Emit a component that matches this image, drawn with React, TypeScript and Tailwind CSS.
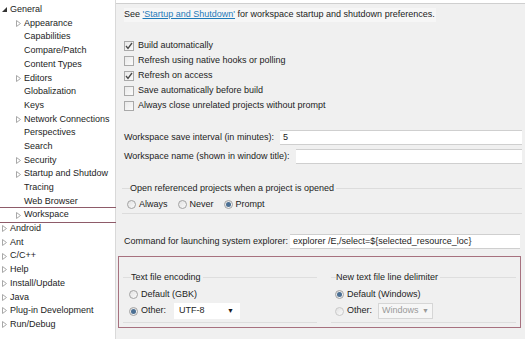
const tree: { label: string; level: number; arrow: "open" | "closed" | "none"; selected?: boolean }[] = [
  { label: "General", level: 0, arrow: "open" },
  { label: "Appearance", level: 1, arrow: "closed" },
  { label: "Capabilities", level: 1, arrow: "none" },
  { label: "Compare/Patch", level: 1, arrow: "none" },
  { label: "Content Types", level: 1, arrow: "none" },
  { label: "Editors", level: 1, arrow: "closed" },
  { label: "Globalization", level: 1, arrow: "none" },
  { label: "Keys", level: 1, arrow: "none" },
  { label: "Network Connections", level: 1, arrow: "closed" },
  { label: "Perspectives", level: 1, arrow: "none" },
  { label: "Search", level: 1, arrow: "none" },
  { label: "Security", level: 1, arrow: "closed" },
  { label: "Startup and Shutdow", level: 1, arrow: "closed" },
  { label: "Tracing", level: 1, arrow: "none" },
  { label: "Web Browser", level: 1, arrow: "none" },
  { label: "Workspace", level: 1, arrow: "closed", selected: true },
  { label: "Android", level: 0, arrow: "closed" },
  { label: "Ant", level: 0, arrow: "closed" },
  { label: "C/C++", level: 0, arrow: "closed" },
  { label: "Help", level: 0, arrow: "closed" },
  { label: "Install/Update", level: 0, arrow: "closed" },
  { label: "Java", level: 0, arrow: "closed" },
  { label: "Plug-in Development", level: 0, arrow: "closed" },
  { label: "Run/Debug", level: 0, arrow: "closed" },
];

const checks = [
  { label: "Build automatically", on: true },
  { label: "Refresh using native hooks or polling", on: false },
  { label: "Refresh on access", on: true },
  { label: "Save automatically before build", on: false },
  { label: "Always close unrelated projects without prompt", on: false },
];

function Arrow({ kind }: { kind: "open" | "closed" | "none" }) {
  if (kind === "none") return <span className="w-[7px]" />;
  if (kind === "open")
    return (
      <svg width="7" height="7" viewBox="0 0 7 7">
        <path d="M6 1 L6 6 L1 6 Z" fill="#333" />
      </svg>
    );
  return (
    <svg width="7" height="7" viewBox="0 0 7 7">
      <path d="M1.5 0.5 L5.5 3.5 L1.5 6.5 Z" fill="none" stroke="#a8a8a8" strokeWidth="1" />
    </svg>
  );
}

function Checkbox({ on }: { on: boolean }) {
  return (
    <span className="flex h-[10px] w-[10px] items-center justify-center border border-[#a9a9a9] bg-gradient-to-br from-[#e9e9e9] to-[#fbfbfb]">
      {on && (
        <svg width="8" height="8" viewBox="0 0 8 8">
          <path d="M1 4 L3 6.5 L7 1" fill="none" stroke="#4a4a4a" strokeWidth="1.3" />
        </svg>
      )}
    </span>
  );
}

function Radio({ on, disabled }: { on: boolean; disabled?: boolean }) {
  return (
    <span
      className={`flex h-[9px] w-[9px] items-center justify-center rounded-full border ${
        disabled ? "border-[#c9c9c9]" : "border-[#a2a2a2]"
      } bg-gradient-to-br from-[#e2e2e2] to-[#fafafa]`}
    >
      {on && <span className="h-[5px] w-[5px] rounded-full bg-[#4b6f93]" />}
    </span>
  );
}

export default function App() {
  return (
    <div className="flex h-[339px] w-[525px] overflow-hidden bg-white font-['Liberation_Sans',Arial,sans-serif] text-[9px] text-[#1c1c1c]">
      {/* preference tree */}
      <div className="flex w-[116px] shrink-0 flex-col border-r border-[#d9d9d9] bg-white pt-[3px]">
        {tree.map((t) => (
          <div
            key={t.label}
            className={`flex h-[13.7px] items-center gap-[2px] whitespace-nowrap ${
              t.level === 0 ? "pl-[1px]" : "pl-[15px]"
            } ${t.selected ? "mr-[-3px] outline outline-1 outline-[#8e5b69]" : ""}`}
          >
            <Arrow kind={t.arrow} />
            <span>{t.label}</span>
          </div>
        ))}
      </div>

      {/* workspace page */}
      <div className="flex flex-1 flex-col bg-white pt-[3px]">
        <div className="flex flex-1 flex-col border-t border-[#cfcfcf] bg-[#f0f0f0] pl-[8px] pr-[3px]">
          <div className="mt-[5px] flex h-[12px] items-center">
            <span className="bg-[#f6f6f6] pr-[1px]">
              See{" "}
              <span className="text-[#1f7ab8] underline">'Startup and Shutdown'</span> for workspace startup and
              shutdown preferences.
            </span>
          </div>

          <div className="mt-[17px] flex flex-col">
            {checks.map((c) => (
              <div key={c.label} className="flex h-[15px] items-center gap-[4px]">
                <Checkbox on={c.on} />
                <span>{c.label}</span>
              </div>
            ))}
          </div>

          <div className="mt-[17px] flex h-[15px] items-center">
            <span className="w-[156px] shrink-0">Workspace save interval (in minutes):</span>
            <div className="flex h-[15px] flex-1 items-center border-y border-[#cfcfcf] bg-white pl-[3px]">5</div>
          </div>
          <div className="mt-[4px] flex h-[15px] items-center">
            <span className="w-[172px] shrink-0">Workspace name (shown in window title):</span>
            <div className="h-[15px] flex-1 border-y border-[#cfcfcf] bg-white" />
          </div>

          <div className="relative mt-[24px] ml-[-2px] h-[26px] border-y border-[#dcdcdc]">
            <span className="absolute left-[8px] top-[-7px] bg-[#f0f0f0] pr-[2px]">
              Open referenced projects when a project is opened
            </span>
            <div className="absolute left-[5px] top-[9px] flex items-center">
              <Radio on={false} />
              <span className="ml-[3px] mr-[10px]">Always</span>
              <Radio on={false} />
              <span className="ml-[3px] mr-[10px]">Never</span>
              <Radio on={true} />
              <span className="ml-[3px]">Prompt</span>
            </div>
          </div>

          <div className="mt-[20px] flex h-[15px] items-center">
            <span className="w-[166px] shrink-0">Command for launching system explorer:</span>
            <div className="mr-[2px] flex h-[15px] flex-1 items-center border-y border-[#cfcfcf] bg-white pl-[3px]">
              explorer /E,/select=${"{"}selected_resource_loc{"}"}
            </div>
          </div>

          {/* encoding / delimiter */}
          <div className="mt-[7px] ml-[-6px] mr-[1px] flex h-[72px] gap-[14px] border border-[#a7717f] px-[4px] pt-[20px]">
            <div className="relative h-[46px] w-[194px] border-y border-[#dedede]">
              <span className="absolute left-[8px] top-[-7px] bg-[#f0f0f0] pr-[2px]">Text file encoding</span>
              <div className="absolute left-[6px] top-[10px] flex items-center gap-[3px]">
                <Radio on={false} />
                <span>Default (GBK)</span>
              </div>
              <div className="absolute left-[6px] top-[25px] flex items-center">
                <Radio on={true} />
                <span className="ml-[3px] w-[33px]">Other:</span>
                <div className="flex h-[16px] w-[66px] items-center justify-between bg-white pl-[5px] pr-[6px]">
                  <span>UTF-8</span>
                  <span className="text-[7px]">▼</span>
                </div>
              </div>
            </div>
            <div className="relative h-[46px] flex-1 border-y border-[#dedede]">
              <span className="absolute left-[5px] top-[-7px] bg-[#f0f0f0] pr-[2px]">New text file line delimiter</span>
              <div className="absolute left-[4px] top-[10px] flex items-center gap-[3px]">
                <Radio on={true} />
                <span>Default (Windows)</span>
              </div>
              <div className="absolute left-[4px] top-[25px] flex items-center">
                <Radio on={false} disabled />
                <span className="ml-[3px] w-[31px]">Other:</span>
                <div className="flex h-[16px] w-[55px] items-center justify-between border border-[#d6d6d6] bg-[#f6f6f6] pl-[3px] pr-[3px] text-[#9a9a9a]">
                  <span>Windows</span>
                  <span className="text-[7px]">▼</span>
                </div>
              </div>
            </div>
          </div>
        </div>
      </div>
    </div>
  );
}
